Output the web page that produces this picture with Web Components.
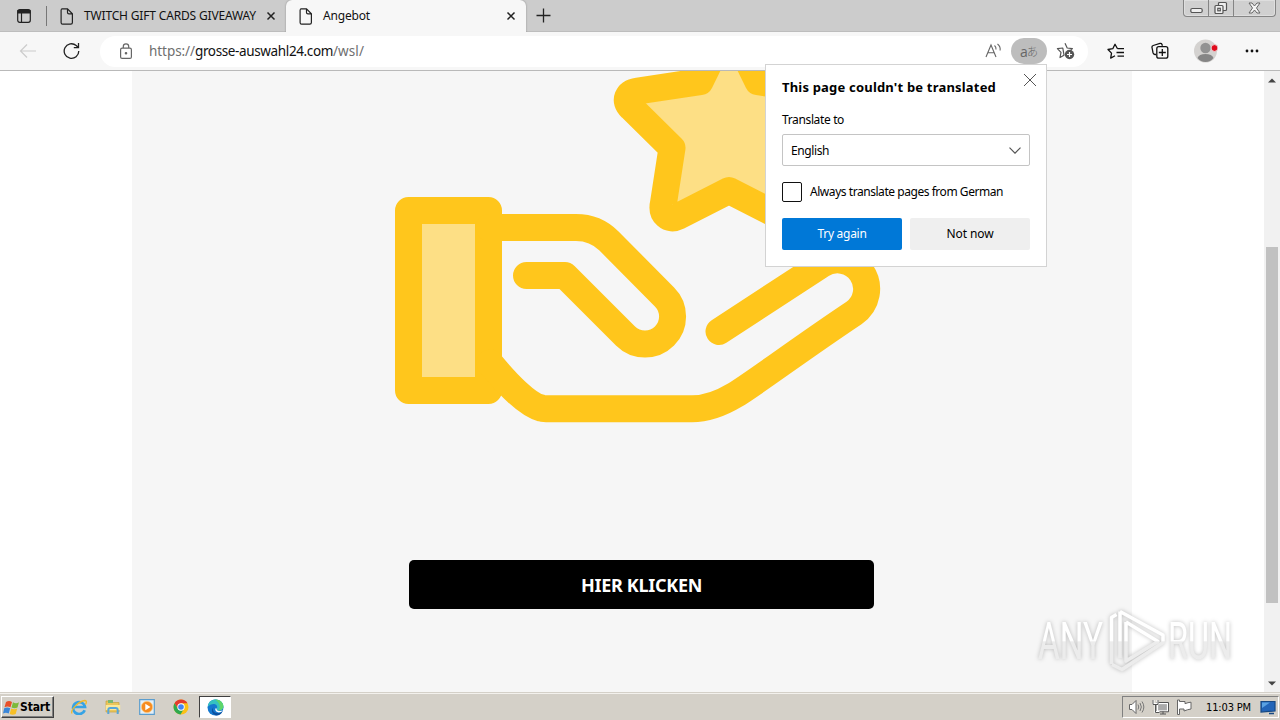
<!DOCTYPE html>
<html lang="de">
<head>
<meta charset="utf-8">
<title>Angebot</title>
<style>
    body {
        margin: 0;
        width: 1280px;
        height: 720px;
        overflow: hidden;
        font: 12px 'Noto Sans', 'Open Sans', sans-serif;
        color: #111;
    }
</style>
</head>
<body>
<desktop-screen>
    <tab-strip slot="tabs">
        <browser-tab fit="172">TWITCH GIFT CARDS GIVEAWAY</browser-tab>
        <browser-tab active fit="47">Angebot</browser-tab>
    </tab-strip>
    <tool-bar slot="toolbar"></tool-bar>
    <offer-page slot="page">
        <fit-text fit="121">HIER KLICKEN</fit-text>
    </offer-page>
    <translate-popup slot="popup"></translate-popup>
    <brand-mark slot="popup"></brand-mark>
    <task-bar slot="taskbar"></task-bar>
</desktop-screen>

<script>
const svg = (w, h, body, extra = '') =>
    `<svg width="${w}" height="${h}" viewBox="0 0 ${w} ${h}" fill="none" stroke="#222" stroke-width="1.2" ${extra}>${body}</svg>`;

class BaseElement extends HTMLElement {
    constructor() {
        super();
        this.attachShadow({ mode: 'open' });
    }

    connectedCallback() {
        this.shadowRoot.innerHTML = `<style>*{box-sizing:border-box} svg{display:block;flex:none}</style>${this.render()}`;
    }
}

// Single line of text, spaced out or tightened to the width in "fit"
class FitText extends HTMLElement {
    constructor() {
        super();
        this.attachShadow({ mode: 'open' });
        this.shadowRoot.innerHTML = '<style>:host{display:inline-block;white-space:nowrap}</style><slot></slot>';
    }

    connectedCallback() {
        this.adjust();
    }

    adjust() {
        const want = Number(this.getAttribute('fit'));
        const chars = this.textContent.length;
        this.style.letterSpacing = '0';
        const have = this.getBoundingClientRect().width;
        if (want && chars && have) {
            this.style.letterSpacing = `${(want - have) / chars}px`;
        }
    }
}

class DesktopScreen extends BaseElement {
    render() {
        return `
            <style>
                :host {
                    display: grid;
                    grid-template-rows: 32px 39px 621px 28px;
                    width: 1280px;
                    height: 720px;
                    position: relative;
                }
            </style>
            <slot name="tabs"></slot>
            <slot name="toolbar"></slot>
            <slot name="page"></slot>
            <slot name="taskbar"></slot>
            <slot name="popup"></slot>
        `;
    }
}

class BrowserTab extends BaseElement {
    render() {
        return `
            <style>
                :host {
                    display: flex;
                    align-items: center;
                    width: 239px;
                    height: 32px;
                    padding: 0 10px 0 13px;
                    box-sizing: border-box;
                }
                :host([active]) {
                    width: 240px;
                    background: #f7f7f7;
                    border-radius: 6px 6px 0 0;
                    box-shadow: 0 0 2px rgba(0,0,0,0.35);
                }
                fit-text { margin-left: 11px; line-height: 32px; }
                .close { margin-left: auto; }
            </style>
            ${svg(13, 17, '<path d="M1.5 .8h6l4.900 5v8.700q0 1.600-1.600 1.600h-8.200q-1.500 0-1.500-1.600v-12.200q0-1.500 1.400-1.500zM7.500 .8v3.600q0 1.400 1.400 1.400h3.500"/>')}
            <fit-text fit="${this.getAttribute('fit')}">${this.textContent.trim()}</fit-text>
            ${svg(10, 10, '<path d="M1.500 1.500l7 7M8.500 1.500l-7 7" stroke-width="1.500"/>', 'class="close"')}
        `;
    }
}

class TabStrip extends BaseElement {
    render() {
        return `
            <style>
                :host {
                    display: flex;
                    background: #ccc;
                    box-shadow: inset 0 -1px #bdbdbd;
                    overflow: hidden;
                }
                .menu { margin: 9px 0 0 17px; }
                .rule { width: 1px; height: 20px; margin: 6px 0 0 15px; background: #777; }
                .plus { margin: 8px 0 0 10px; }
                .win {
                    display: flex;
                    width: 93px;
                    height: 17px;
                    margin: 0 4px 0 auto;
                    border: 1px solid #858585;
                    border-top: 0;
                    border-radius: 0 0 4px 4px;
                    background: #d0d0d0;
                    box-shadow: inset 0 0 0 1px #dedede;
                }
                .win span { display: grid; place-items: center; width: 25px; border-right: 1px solid #858585; }
                .win span:last-child { width: 41px; border: 0; }
            </style>
            ${svg(14, 14, '<rect x=".7" y=".7" width="12.600" height="12.600" rx="2"/><path d="M1 1.500h12v2.500H1z" fill="#222"/><path d="M4.500 4v9"/>', 'class="menu"')}
            <div class="rule"></div>
            <slot></slot>
            ${svg(15, 15, '<path d="M7.500 .5v14M.5 7.500h14" stroke-width="1.300"/>', 'class="plus"')}
            <div class="win">
                <span>${svg(13, 16, '<rect x=".8" y="8.500" width="11.400" height="4" rx="1.500" fill="#eee" stroke="#555"/>')}</span>
                <span>${svg(14, 16, '<rect x="4.500" y="2.500" width="8" height="8" rx="1" fill="#eee" stroke="#555"/><rect x="1" y="5.500" width="8" height="8" rx="1" fill="#eee" stroke="#555"/><rect x="3.800" y="8.300" width="2.500" height="2.500" stroke="#555"/>')}</span>
                <span>${svg(13, 16, '<path d="M1 3h3l2.500 3L9 3h3L8.500 8l3.500 5H9l-2.500-3L4 13H1l3.500-5z" fill="#f4f4f4" stroke="#666" stroke-width="1"/>')}</span>
            </div>
        `;
    }
}

class ToolBar extends BaseElement {
    render() {
        return `
            <style>
                :host {
                    display: flex;
                    align-items: center;
                    background: #f7f7f7;
                    border-bottom: 1px solid #b9b9b9;
                }
                .back { margin-left: 19px; }
                .reload { margin-left: 26px; }
                .address {
                    display: flex;
                    align-items: center;
                    width: 988px;
                    height: 31px;
                    margin-left: 20px;
                    padding: 0 13px 0 20px;
                    border-radius: 16px;
                    background: #fff;
                    color: #6f6f6f;
                    font-size: 13.500px;
                }
                .url { margin-left: 17px; white-space: nowrap; line-height: 28px; }
                b { font-weight: 400; color: #111; }
                .read { margin-left: auto; }
                .pill {
                    display: flex;
                    align-items: center;
                    justify-content: center;
                    width: 36px;
                    height: 26px;
                    margin: 0 9px 0 9px;
                    border-radius: 13px;
                    background: #bdbdbd;
                    color: #666;
                    font: 14px/23px 'Open Sans', 'Noto Sans CJK JP', sans-serif;
                }
                .pill small { font: 300 11px/24px 'Noto Sans CJK JP', sans-serif; margin-left: -1px; }
                .fav { margin-left: 19px; }
                .collect { margin-left: 26px; }
                .profile { margin-left: 25px; }
                .more { margin-left: 27px; }
            </style>
            ${svg(18, 16, '<path d="M17 8H2M8 1.500L1.500 8 8 14.500" stroke="#ccc"/>', 'class="back"')}
            ${svg(17, 18, '<path d="M15.800 9A7.300 7.300 0 1 1 13.200 3.500L15.300 5.500M15.500 1v4.700h-4.700" stroke-width="1.300"/>', 'class="reload"')}
            <div class="address">
                ${svg(12, 17, '<rect x=".6" y="5.200" width="10.800" height="10.200" rx="1.500" stroke="#666"/><path d="M3.300 5V3.600a2.700 2.700 0 0 1 5.400 0V5" stroke="#666"/><circle cx="6" cy="10.300" r=".7" fill="#666" stroke="#666"/>')}
                <span class="url"><fit-text fit="46">https://</fit-text><b><fit-text fit="138">grosse-auswahl24.com</fit-text></b><fit-text fit="31">/wsl/</fit-text></span>
                ${svg(17, 16, '<path d="M1 14L6 2l5 12M2.800 9.800h6.500M9.500 2.500q1.800 1.500 1.500 4M12.500 1q3.200 2.400 2.600 6.500" stroke="#666" stroke-width="1.100"/>', 'class="read"')}
                <span class="pill">a<small>あ</small></span>
                ${svg(19, 18, '<path d="M9 1.200l2.200 4.800 5.200.6-3.800 3.600M8 13.200L4 15.500l1-5.200L1.400 6.700l5.400-.7z" stroke="#555" stroke-linejoin="round"/><circle cx="13.500" cy="12.500" r="4.700" fill="#555" stroke="none"/><path d="M13.500 10v5M11 12.500h5" stroke="#fff"/>')}
            </div>
            ${svg(18, 17, '<path d="M10.500 5.700L8 1.200 5.800 5.700 1 6.500l3.500 3.600-.8 5 4.300-2.300M10.500 5.700H17M9.500 9.500H17M10.500 13.200H17" stroke="#111" stroke-width="1.300" stroke-linejoin="round"/>', 'class="fav"')}
            ${svg(18, 18, '<path d="M5 12.500H4q-1.500-.3-2-1.800L1 5.500q-.3-1.500 1.200-2L9 1.400q1.500-.3 2 1l.4 1.300" stroke="#111" stroke-width="1.300"/><rect x="5.800" y="4.700" width="11" height="11.500" rx="2" stroke="#111" stroke-width="1.300"/><path d="M11.300 7v7M7.800 10.500h7" stroke="#111" stroke-width="1.300"/>', 'class="collect"')}
            ${svg(24, 24, '<circle cx="11.500" cy="12" r="11.500" fill="#d4d2d0" stroke="none"/><circle cx="11.500" cy="9" r="5.200" fill="#929292" stroke="none"/><path d="M3.500 19q1.500-4 8-4t8 4q-3 4-8 4t-8-4" fill="#858585" stroke="none"/><circle cx="20.500" cy="9" r="3.400" fill="#e00b1c" stroke="#eee" stroke-width=".8"/>', 'class="profile"')}
            ${svg(14, 4, '<g fill="#111" stroke="none"><circle cx="2" cy="2" r="1.400"/><circle cx="7" cy="2" r="1.400"/><circle cx="12" cy="2" r="1.400"/></g>', 'class="more"')}
        `;
    }
}

class OfferPage extends BaseElement {
    connectedCallback() {
        super.connectedCallback();
        this.querySelector('fit-text').adjust();
    }

    render() {
        return `
            <style>
                :host { display: flex; background: #fff; }
                main { width: 1000px; margin-left: 132px; background: #f6f6f6; }
                .gift { margin-left: 263px; }
                button {
                    display: flex;
                    align-items: center;
                    justify-content: center;
                    width: 465px;
                    height: 49px;
                    margin: 137px 0 0 277px;
                    padding: 0;
                    border: 0;
                    border-radius: 5px;
                    background: #000;
                    color: #fff;
                    font: 700 18px/1 'Noto Sans', sans-serif;
                }
                .bar {
                    display: flex;
                    flex-direction: column;
                    align-items: center;
                    width: 16px;
                    margin-left: auto;
                    background: #f1f1f1;
                }
                .thumb { width: 12px; height: 356px; margin-top: 164px; background: #c1c1c1; }
                .up { margin-top: 7px; }
                .down { margin: auto 0 6px; }
            </style>
            <main>
                <svg class="gift" width="486" height="352" viewBox="395 71 486 352" fill="none"
                     stroke="#ffc61c" stroke-width="27" stroke-linecap="round" stroke-linejoin="round">
                    <rect x="408.500" y="210.500" width="80" height="180" fill="#fddf85"/>
                    <path d="M489 227.500H576C590 227.500 600 232 609 241L664.500 297A27.500 27.500 0 0 1 625.500 336L565 275.500H526.500"/>
                    <path d="M490 363C508 385 528 405 541 408Q543 408.800 546 408.800H692C704 408.800 720 404 735 395C752 385 800 349 854 313A29 29 0 0 0 821 265L719 331.500"/>
                    <path fill="#fddf85" d="M700 81.700L638 91C627 92.500 624 101 631 107.500L672 148L663.500 203C661 214 669 221 678 216.500L729 190.500L780 216.500C789 221 797 214 794.500 203L786 148L827 107.500C834 101 831 92.500 820 91L758 81.700L735 35Q729 27 723 35Z"/>
                </svg>
                <button><slot></slot></button>
            </main>
            <div class="bar">
                ${svg(8, 5, '<path d="M0 4.500L4 .5l4 4z" fill="#444" stroke="none"/>', 'class="up"')}
                <div class="thumb"></div>
                ${svg(8, 5, '<path d="M0 .5l4 4 4-4z" fill="#444" stroke="none"/>', 'class="down"')}
            </div>
        `;
    }
}

class TranslatePopup extends BaseElement {
    render() {
        return `
            <style>
                :host {
                    position: absolute;
                    left: 765px;
                    top: 64px;
                    width: 282px;
                    height: 203px;
                    box-sizing: border-box;
                    padding: 13px 16px 0;
                    border: 1px solid #d3d3d3;
                    background: #fff;
                    color: #000;
                }
                header { display: flex; justify-content: space-between; height: 33px; }
                header fit-text { font-size: 13px; font-weight: 700; line-height: 19px; }
                header svg { margin: -5px -7px 0 0; }
                label { display: block; height: 23px; line-height: 18px; }
                .select {
                    display: flex;
                    align-items: center;
                    justify-content: space-between;
                    height: 32px;
                    padding: 0 8px;
                    border: 1px solid #c4c4c4;
                    border-radius: 2px;
                }
                .check { display: flex; align-items: center; gap: 8px; margin-top: 16px; height: 20px; }
                .check fit-text { margin-top: -2px; }
                .box { width: 20px; height: 20px; border: 1px solid #111; border-radius: 2px; }
                .actions { display: flex; gap: 8px; margin-top: 16px; }
                .actions div {
                    width: 120px;
                    height: 32px;
                    border-radius: 2px;
                    background: #efefef;
                    text-align: center;
                    line-height: 31px;
                }
                .actions .primary { background: #0078d7; color: #fff; }
            </style>
            <header>
                <fit-text fit="214">This page couldn't be translated</fit-text>
                ${svg(14, 14, '<path d="M1 1l12 12M13 1L1 13" stroke="#555" stroke-width="1"/>')}
            </header>
            <label><fit-text fit="62">Translate to</fit-text></label>
            <div class="select">
                <fit-text fit="38">English</fit-text>
                ${svg(12, 7, '<path d="M.5 .7L6 6.200 11.500 .7" stroke="#555"/>')}
            </div>
            <div class="check"><span class="box"></span><fit-text fit="193">Always translate pages from German</fit-text></div>
            <div class="actions">
                <div class="primary"><fit-text fit="49">Try again</fit-text></div>
                <div><fit-text fit="47">Not now</fit-text></div>
            </div>
        `;
    }
}

// Translucent brand overlay in the lower right corner
class BrandMark extends BaseElement {
    render() {
        return `
            <style>
                :host { position: absolute; left: 1030px; top: 604px; pointer-events: none; }
                svg { filter: drop-shadow(0 0 2px rgba(0,0,0,0.25)); overflow: visible; }
                text { font: 400 52px Roboto, sans-serif; }
            </style>
            <svg width="220" height="76" viewBox="0 0 220 76">
                <defs>
                    <linearGradient id="fade" x1="0" y1="0" x2="0" y2="76" gradientUnits="userSpaceOnUse">
                        <stop offset=".48" stop-color="#fff"/>
                        <stop offset=".5" stop-color="#ececec"/>
                    </linearGradient>
                </defs>
                <text x="8" y="55" fill="url(#fade)" textLength="65" lengthAdjust="spacingAndGlyphs">ANY</text>
                <text x="138" y="55" fill="url(#fade)" textLength="64" lengthAdjust="spacingAndGlyphs">RUN</text>
                <path d="M90 7.500V54M90 7.500L133 31v7.500L92 65.500l-10-5M96 18L128 37.500 96 57V18M81.500 60V13.500l5-3" fill="none" stroke="url(#fade)" stroke-width="3.500" stroke-linejoin="round"/>
            </svg>
        `;
    }
}

class TaskBar extends BaseElement {
    render() {
        return `
            <style>
                :host {
                    display: flex;
                    align-items: center;
                    padding: 2px 1px 0;
                    background: #d4d0c8;
                    box-shadow: inset 0 1px #d4d0c8, inset 0 2px #f3f1ed;
                    font: 11px 'DejaVu Sans Condensed', 'DejaVu Sans', sans-serif;
                    font-stretch: condensed;
                    color: #000;
                }
                .start {
                    display: flex;
                    align-items: center;
                    gap: 0;
                    width: 53px;
                    height: 22px;
                    padding-left: 1px;
                    border: 1px solid;
                    border-color: #fff #404040 #404040 #fff;
                    box-shadow: inset -1px -1px #808080;
                    font-weight: 700;
                    font-size: 12px;
                }
                .quick { display: flex; gap: 18px; margin-left: 17px; }
                .edge {
                    display: grid;
                    place-items: center;
                    width: 32px;
                    height: 22px;
                    margin-left: 10px;
                    border: 1px solid;
                    border-color: #404040 #fff #fff #404040;
                    background: #fff;
                }
                .tray {
                    display: flex;
                    align-items: center;
                    width: 157px;
                    height: 22px;
                    margin-left: auto;
                    padding-left: 5px;
                    border: 1px solid;
                    border-color: #808080 #fff #fff #808080;
                }
                .flag { margin-left: 7px; }
                .net { margin-left: 7px; }
                .tray fit-text { margin-left: 14px; }
                .desk { margin-left: 9px; }
            </style>
            <div class="start">
                ${svg(17, 17, '<g stroke="none"><path d="M3 3q3-2 6 0L7.500 8.300q-3-1.600-6 0z" fill="#e8502a"/><path d="M10 3.300q3 1.700 6 0l-1.500 5.200q-3 1.600-6 0z" fill="#7dba3c"/><path d="M1.200 9.200q3-1.600 6 0L5.700 14.500q-3-1.600-5.700 0z" fill="#3a86d8"/><path d="M8.200 9.500q3 1.600 6 0L12.700 15q-3 1.500-6 0z" fill="#f6bf26"/></g>')}
                <fit-text fit="30">Start</fit-text>
            </div>
            <div class="quick">
                ${svg(16, 16, '<path d="M13.700 11.200A6 6 0 1 1 14 8H3" stroke="#36a3e5" stroke-width="2.700"/><path d="M1 14.500C-1 11 8 2 14 1.500q2.500.2.500 4" stroke="#f0b92a" stroke-width="1.300"/>')}
                ${svg(16, 16, '<path d="M1 3.500V2h5l1 1.500h7V13H1z" fill="#eac65b" stroke="#c9a13c" stroke-width=".7"/><path d="M3 1h5v3H3z" fill="#7ab870" stroke="none"/><path d="M.8 6h14.400v5H.8z" fill="#fbe899" stroke="none"/><path d="M3.300 15v-4q0-2 2-2h5.400q2 0 2 2v4" stroke="#57a6d9" stroke-width="2"/>')}
                ${svg(16, 16, '<path d="M.7 .7h14.600v14.600H.7z" fill="#e3eff8" stroke="#5b9dce"/><circle cx="8" cy="8" r="5.700" fill="#f68b1f" stroke="#ffd08a" stroke-width=".7"/><path d="M6.300 4.700L11.500 8l-5.200 3.300z" fill="#fff" stroke="none"/>')}
                ${svg(16, 16, '<g stroke="none"><circle cx="8" cy="8" r="7.500" fill="#fbc116"/><path d="M1.500 4.300A7.500 7.500 0 0 1 14.500 4.300H8L5 9.700z" fill="#e33b2e"/><path d="M1.500 4.300A7.500 7.500 0 0 0 7.500 15.500l3.300-5.500L8 11.500l-3.200-2z" fill="#2da94f"/><circle cx="8" cy="8" r="3.700" fill="#fff"/><circle cx="8" cy="8" r="2.800" fill="#4285f4"/></g>')}
            </div>
            <div class="edge">
                ${svg(17, 17, '<g stroke="none"><circle cx="8.500" cy="8.500" r="8" fill="#1478cf"/><path d="M.8 7.500C1.700 2.300 5 .4 8.800 .5c5.200.2 7.700 4 7.600 7-.1 2.700-2.300 4-4.800 4q-3-.3-1.700-1.800c1-2.600-.6-4.700-3.700-4.700Q3 5 .8 7.500" fill="#35c2c0"/><path d="M8.200 .5c5.500 0 8.300 3.800 8.200 7-.1 2.700-2.300 4-4.800 4 3-4 0-8.500-3.400-11" fill="#5ed66a"/><path d="M6.300 8q-1.700 6 4.500 6.300 2.500 0 4.700-1.800-2 4.200-6.500 4Q2.500 14 6.300 8" fill="#0b4f9e"/><path d="M9.800 9.500q-1 2.200 3 2.500 1.800 0 3.200-1-1.500 2.500-4.200 2.500Q8 13 8.200 9.500z" fill="#fff"/></g>')}
            </div>
            <div class="tray">
                ${svg(17, 16, '<path d="M1.500 5.500H4L8 1.500v13l-4-4H1.500z" fill="#fff" stroke="#666" stroke-width="1"/><path d="M10 5.500q1.500 2.500 0 5M12 4q2.700 4 0 8M14 2.500q3.700 5.500 0 11" stroke="#777" stroke-width="1"/>')}
                ${svg(17, 16, '<rect x="5.500" y="4.500" width="10" height="7.500" fill="#aaa" stroke="#fff"/><path d="M4.500 3.500h12v9.300H4.500zM8 15h6M11 12.500V15" stroke="#555" stroke-width="1"/><path d="M1.500 1v4h4V1M3.500 5v8h4" stroke="#fff" stroke-width="2"/><path d="M1 1v4.500h5V1M3.500 5.500v8h4" stroke="#555" stroke-width="1"/>', 'class="net"')}
                ${svg(16, 16, '<path d="M1.500 1v14.500h2V10H8v2q3.500-1.500 7-2V3.200q-3 .2-6 1.500V2.500H3.500V1z" fill="#fff" stroke="#666" stroke-width="1"/>', 'class="flag"')}
                <fit-text fit="45">11:03 PM</fit-text>
                ${svg(16, 15, '<path d="M1 1.500h14v9.500l-14 1z" fill="#2365b8" stroke="#174983"/><path d="M2 2.500h8L2 8z" fill="#5aa2e2" stroke="none"/><path d="M9 13.500h5" stroke="#174983" stroke-width="1.500"/>', 'class="desk"')}
            </div>
        `;
    }
}

customElements.define('fit-text', FitText);
customElements.define('desktop-screen', DesktopScreen);
customElements.define('browser-tab', BrowserTab);
customElements.define('tab-strip', TabStrip);
customElements.define('tool-bar', ToolBar);
customElements.define('offer-page', OfferPage);
customElements.define('translate-popup', TranslatePopup);
customElements.define('brand-mark', BrandMark);
customElements.define('task-bar', TaskBar);
</script>
</body>
</html>
